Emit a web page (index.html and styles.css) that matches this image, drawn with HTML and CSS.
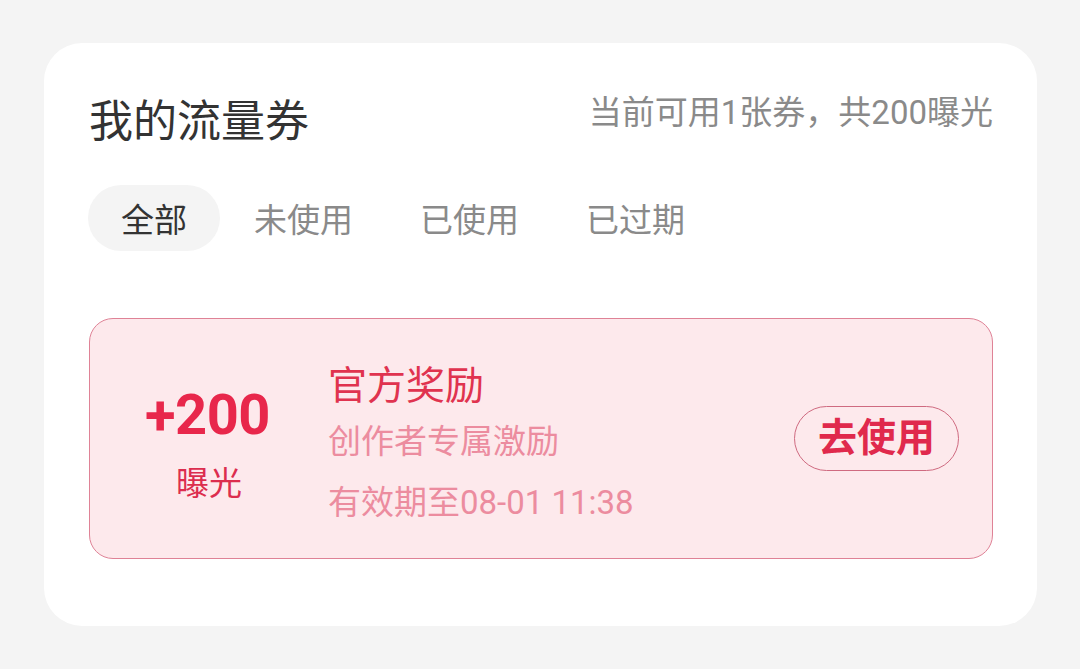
FILE: index.html
```html
<!DOCTYPE html>
<html lang="zh-CN">
<head>
<meta charset="utf-8">
<title>我的流量券</title>
<link rel="stylesheet" href="styles.css">
</head>
<body>
<div class="card">
  <div class="header">
    <h1 class="title">我的流量券</h1>
    <div class="summary">当前可用1张券，共200曝光</div>
  </div>
  <div class="tabs">
    <div class="tab active">全部</div>
    <div class="tab">未使用</div>
    <div class="tab">已使用</div>
    <div class="tab">已过期</div>
  </div>
  <div class="coupon">
    <div class="amount">
      <div class="amount-num">+200</div>
      <div class="amount-unit">曝光</div>
    </div>
    <div class="info">
      <div class="info-title">官方奖励</div>
      <div class="info-sub">创作者专属激励</div>
      <div class="info-sub">有效期至08-01 11:38</div>
    </div>
    <div class="action">
      <div class="use-btn">去使用</div>
    </div>
  </div>
</div>
</body>
</html>
```

FILE: styles.css
```css
* { box-sizing: border-box; }
html, body { margin: 0; padding: 0; }
body {
  background: #f4f4f4;
  padding: 43px 43px 0 44px;
  font-family: Roboto, "Noto Sans CJK SC", sans-serif;
  height: 669px;
  overflow: hidden;
}
.card {
  background: #ffffff;
  border-radius: 38px;
  padding: 45px 44px 67px 45px;
  width: 993px;
}
.header {
  display: flex;
  justify-content: space-between;
  align-items: flex-start;
}
.title {
  margin: 0;
  font-size: 44px;
  line-height: 60px;
  font-weight: 400;
  color: #333333;
  font-family: "Noto Sans CJK SC", sans-serif;
}
.summary {
  font-size: 33px;
  line-height: 50px;
  color: #8a8a8a;
}
.tabs {
  display: flex;
  gap: 1px;
  margin-top: 37px;
  margin-left: -1px;
}
.tab {
  height: 66px;
  line-height: 66px;
  padding: 0 33px;
  border-radius: 33px;
  font-size: 33px;
  color: #8a8a8a;
  font-family: "Noto Sans CJK SC", sans-serif;
}
.tab.active {
  background: #f4f4f4;
  color: #333333;
}
.coupon {
  margin-top: 67px;
  height: 241px;
  border: 1px solid #df8296;
  border-radius: 24px;
  background: #fde9ec;
  display: flex;
  align-items: center;
}
.amount {
  width: 238px;
  text-align: center;
  padding-top: 10px;
}
.amount-num {
  font-size: 56px;
  line-height: 64px;
  font-weight: 700;
  color: #e8274b;
  letter-spacing: -0.5px;
  margin-left: -3px;
}
.amount-unit {
  margin-top: 17px;
  font-size: 33px;
  line-height: 40px;
  color: #dc2d4e;
}
.info {
  flex: 1;
  padding-top: 16px;
}
.info-title {
  font-size: 39px;
  line-height: 50px;
  color: #e0334f;
}
.info-sub {
  font-size: 33px;
  line-height: 61px;
  color: #ec8c9f;
}
.action {
  padding-right: 33px;
}
.use-btn {
  height: 65px;
  line-height: 63px;
  padding: 0 23px;
  border: 1px solid #cf6a80;
  border-radius: 33px;
  font-size: 39px;
  font-weight: 700;
  color: #e0294c;
}
```
